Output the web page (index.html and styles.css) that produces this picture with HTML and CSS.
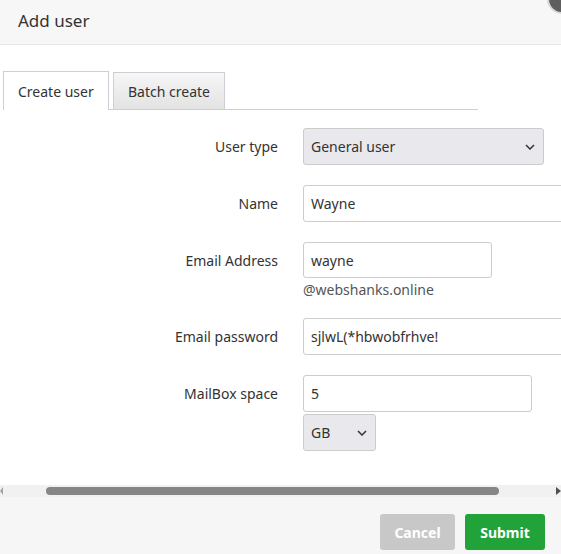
FILE: index.html
```html
<html>
<head>
	<title>Add user</title>
	<link rel="stylesheet" href="styles.css">
</head>
<body>
	<div class="modal">
		<div class="modal-header">
			<h4 class="modal-title">Add user</h4>
			<span class="close"></span>
		</div>

		<div class="modal-body">
			<ul class="tabs">
				<li class="tab active">Create user</li>
				<li class="tab">Batch create</li>
			</ul>

			<form class="form">
				<label class="label">User type</label>
				<div class="field">
					<div class="select-wrap wide">
						<select class="select"><option>General user</option></select>
						<svg class="chevron" width="10" height="6" viewBox="0 0 10 6"><path d="M1 1l4 4 4-4" fill="none" stroke="#333" stroke-width="1.5"/></svg>
					</div>
				</div>

				<label class="label">Name</label>
				<div class="field"><input class="input long" value="Wayne"></div>

				<label class="label">Email Address</label>
				<div class="field">
					<input class="input email" value="wayne">
					<div class="help">@webshanks.online</div>
				</div>

				<label class="label">Email password</label>
				<div class="field"><input class="input long" value="sjlwL(*hbwobfrhve!"></div>

				<label class="label">MailBox space</label>
				<div class="field">
					<input class="input space" value="5">
					<div class="select-wrap unit">
						<select class="select"><option>GB</option></select>
						<svg class="chevron" width="10" height="6" viewBox="0 0 10 6"><path d="M1 1l4 4 4-4" fill="none" stroke="#333" stroke-width="1.5"/></svg>
					</div>
				</div>
			</form>
		</div>

		<div class="hscroll">
			<span class="arrow left"></span>
			<div class="track"><div class="thumb"></div></div>
			<span class="arrow right"></span>
		</div>

		<div class="modal-footer">
			<button class="btn cancel">Cancel</button>
			<button class="btn submit">Submit</button>
		</div>
	</div>
</body>
</html>
```

FILE: styles.css
```css
body {
	margin:0;
	background-color:white;
	color:#333;
	font-family:"Noto Sans", "Open Sans", Arial, sans-serif;
	font-size:14px;
	overflow:hidden;
}
.modal {
	position:relative;
	display:flex;
	flex-direction:column;
	width:561px;
	height:554px;
	overflow:hidden;
}
.modal-header {
	height:44px;
	background-color:#f7f7f7;
	border-bottom:1px solid #e6e6e6;
	display:flex;
	align-items:center;
	padding-left:18px;
}
.modal-title {
	margin:0;
	font-size:17px;
	font-weight:normal;
	color:#333;
	position:relative;
	top:-2px;
}
.close {
	position:absolute;
	right:-16px;
	top:-16px;
	width:26px;
	height:26px;
	border-radius:50%;
	background-color:#5e5e5e;
	border:2px solid #d8d8d8;
}
.modal-body {
	flex:1;
	padding:26px 0 0 3px;
	overflow:hidden;
}
.tabs {
	list-style:none;
	margin:0;
	padding:0;
	width:475px;
	display:flex;
	gap:4px;
	border-bottom:1px solid #cfcdd6;
	height:38px;
}
.tab {
	box-sizing:border-box;
	height:38px;
	padding:0 14px;
	line-height:38px;
	border:1px solid #cfcdd6;
	background:linear-gradient(#f6f6f6, #e3e3e3);
	margin-top:1px;
}
.tab.active {
	background:white;
	height:39px;
	margin-top:0;
	border-bottom:none;
	line-height:40px;
	width:106px;
}
.form {
	display:grid;
	grid-template-columns:275px auto;
	column-gap:25px;
	row-gap:20px;
	margin:18px 0 0 0;
	align-items:start;
}
.label {
	text-align:right;
	line-height:37px;
	white-space:nowrap;
}
.field {
	display:flex;
	flex-direction:column;
	align-items:flex-start;
	gap:2px;
}
.input, .select {
	box-sizing:border-box;
	height:37px;
	border:1px solid #cccccc;
	border-radius:3px;
	padding:0 7px;
	font-family:inherit;
	font-size:14px;
	color:#333;
	background-color:white;
	outline:none;
}
.input.long { width:300px; }
.input.email { width:189px; height:36px; }
.input.space { width:229px; }
.help {
	line-height:20px;
	color:#555;
	margin-bottom:-2px;
}
.select-wrap {
	position:relative;
}
.select {
	-webkit-appearance:none;
	appearance:none;
	background-color:#e9e9ed;
	width:100%;
}
.select-wrap.wide { width:241px; }
.select-wrap.unit { width:73px; }
.chevron {
	position:absolute;
	right:9px;
	top:16px;
}
.hscroll {
	height:12px;
	background-color:#f1f1f1;
	display:flex;
	align-items:center;
}
.arrow {
	width:0;
	height:0;
	border-top:4px solid transparent;
	border-bottom:4px solid transparent;
}
.arrow.left {
	border-right:3px solid #a3a3a3;
}
.arrow.right {
	border-left:5px solid #505050;
}
.track {
	flex:1;
	padding:0 57px 0 43px;
}
.thumb {
	height:8px;
	border-radius:4px;
	background-color:#868686;
}
.modal-footer {
	height:57px;
	background-color:#f5f6f5;
	display:flex;
	justify-content:flex-end;
	align-items:flex-end;
	gap:10px;
	padding:0 16px 4px 0;
	box-sizing:border-box;
}
.btn {
	height:36px;
	border:none;
	border-radius:3px;
	color:white;
	font-family:inherit;
	font-size:14px;
	font-weight:bold;
}
.btn.cancel {
	width:75px;
	background-color:#c8c8c8;
}
.btn.submit {
	width:80px;
	background-color:#21a33a;
}
```
